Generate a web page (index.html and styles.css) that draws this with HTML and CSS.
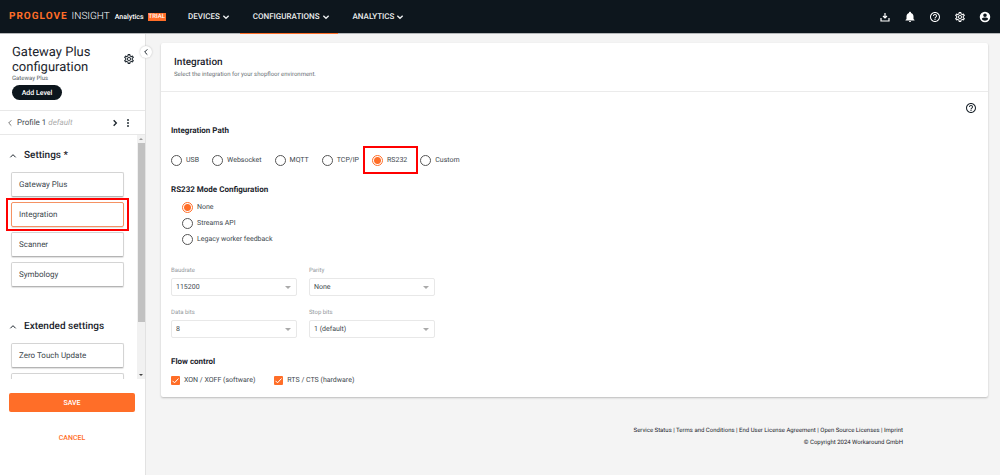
FILE: index.html
```html
<!DOCTYPE html>
<html lang="en">
<head>
<meta charset="utf-8">
<title>Gateway Plus configuration</title>
<link rel="stylesheet" href="styles.css">
</head>
<body>
<svg class="defs" aria-hidden="true">
  <symbol id="gear" viewBox="0 0 24 24"><path fill="currentColor" d="M19.43 12.98c.04-.32.07-.64.07-.98s-.03-.66-.07-.98l2.11-1.65c.19-.15.24-.42.12-.64l-2-3.46c-.09-.16-.26-.25-.44-.25-.06 0-.12.01-.17.03l-2.49 1c-.52-.4-1.08-.73-1.69-.98l-.38-2.65C14.46 2.18 14.25 2 14 2h-4c-.25 0-.46.18-.49.42l-.38 2.65c-.61.25-1.17.59-1.69.98l-2.49-1c-.06-.02-.12-.03-.18-.03-.17 0-.34.09-.43.25l-2 3.46c-.13.22-.07.49.12.64l2.11 1.65c-.04.32-.07.65-.07.98s.03.66.07.98l-2.11 1.65c-.19.15-.24.42-.12.64l2 3.46c.09.16.26.25.44.25.06 0 .12-.01.17-.03l2.49-1c.52.4 1.08.73 1.69.98l.38 2.65c.03.24.24.42.49.42h4c.25 0 .46-.18.49-.42l.38-2.65c.61-.25 1.17-.59 1.69-.98l2.49 1c.06.02.12.03.18.03.17 0 .34-.09.43-.25l2-3.46c.12-.22.07-.49-.12-.64l-2.11-1.65zm-1.98-1.71c.04.31.05.52.05.73 0 .21-.02.43-.05.73l-.14 1.13.89.7 1.08.84-.7 1.21-1.27-.51-1.04-.42-.9.68c-.43.32-.84.56-1.25.73l-1.06.43-.16 1.13-.2 1.35h-1.4l-.19-1.35-.16-1.13-1.06-.43c-.43-.18-.83-.41-1.23-.71l-.91-.7-1.06.43-1.27.51-.7-1.21 1.08-.84.89-.7-.14-1.13c-.03-.31-.05-.54-.05-.74s.02-.43.05-.73l.14-1.13-.89-.7-1.08-.84.7-1.21 1.27.51 1.04.42.9-.68c.43-.32.84-.56 1.25-.73l1.06-.43.16-1.13.2-1.35h1.39l.19 1.35.16 1.13 1.06.43c.43.18.83.41 1.23.71l.91.7 1.06-.43 1.27-.51.7 1.21-1.07.85-.89.7.14 1.13zM12 8c-2.21 0-4 1.79-4 4s1.79 4 4 4 4-1.79 4-4-1.79-4-4-4zm0 6c-1.1 0-2-.9-2-2s.9-2 2-2 2 .9 2 2-.9 2-2 2z"/></symbol>
  <symbol id="help" viewBox="0 0 24 24"><path fill="currentColor" d="M11 18h2v-2h-2v2zm1-16C6.48 2 2 6.48 2 12s4.480 10 10 10 10-4.480 10-10S17.520 2 12 2zm0 18c-4.410 0-8-3.590-8-8s3.590-8 8-8 8 3.590 8 8-3.590 8-8 8zm0-14c-2.210 0-4 1.790-4 4h2c0-1.100.9-2 2-2s2 .9 2 2c0 2-3 1.750-3 5h2c0-2.250 3-2.500 3-5 0-2.210-1.790-4-4-4z"/></symbol>
  <symbol id="down" viewBox="0 0 12 12"><path d="M2 4l4 4 4-4" fill="none" stroke="currentColor" stroke-width="2"/></symbol>
  <symbol id="up" viewBox="0 0 12 12"><path d="M2 8l4-4 4 4" fill="none" stroke="currentColor" stroke-width="1.500"/></symbol>
  <symbol id="left" viewBox="0 0 12 12"><path d="M8 2L4 6l4 4" fill="none" stroke="currentColor" stroke-width="1.500"/></symbol>
  <symbol id="right" viewBox="0 0 12 12"><path d="M4 2l4 4-4 4" fill="none" stroke="currentColor" stroke-width="2"/></symbol>
</svg>

<header class="topbar">
  <a class="brand" href="#"><span class="brand-name">PROGLOVE</span><span class="brand-product">INSIGHT</span><span class="brand-module">Analytics</span><span class="trial">TRIAL</span></a>
  <nav class="menu">
    <a href="#">DEVICES <svg class="chevron"><use href="#down"/></svg></a>
    <a class="current" href="#">CONFIGURATIONS <svg class="chevron"><use href="#down"/></svg></a>
    <a href="#">ANALYTICS <svg class="chevron"><use href="#down"/></svg></a>
  </nav>
  <div class="tools">
    <button aria-label="Downloads"><svg viewBox="0 0 24 24"><path d="M4 14v6h16v-6M12 4v10M8 10l4 4 4-4" fill="none" stroke="currentColor" stroke-width="2.400"/></svg></button>
    <button aria-label="Notifications"><svg viewBox="0 0 24 24"><path fill="currentColor" d="M12 22c1.100 0 2-.9 2-2h-4c0 1.100.9 2 2 2zm7-6v-5c0-3.500-1.900-6.200-5-7v-.6C14 2.500 13.100 1.500 12 1.500s-2 1-2 1.900V4c-3.100.8-5 3.500-5 7v5l-2 2v1h18v-1z"/></svg></button>
    <button aria-label="Help"><svg><use href="#help"/></svg></button>
    <button aria-label="Settings"><svg><use href="#gear"/></svg></button>
    <button aria-label="Account"><svg viewBox="0 0 24 24"><path fill="currentColor" fill-rule="evenodd" d="M12 1.500a10.500 10.500 0 100 21 10.500 10.500 0 000-21zM12 5a3.600 3.600 0 110 7.200A3.600 3.600 0 0112 5zm0 14.500c-2.700 0-5-1.300-6.300-3.400.1-2 4.200-2.900 6.300-2.900s6.200.9 6.300 2.900c-1.300 2.100-3.600 3.400-6.300 3.400z"/></svg></button>
  </div>
</header>

<div class="shell">
  <aside class="sidebar">
    <button class="collapse" aria-label="Collapse"><svg><use href="#left"/></svg></button>
    <div class="side-head">
      <div class="side-title">
        <h1>Gateway Plus configuration</h1>
        <p>Gateway Plus</p>
        <button class="add">Add Level</button>
      </div>
      <button class="gear" aria-label="Configuration settings"><svg><use href="#gear"/></svg></button>
    </div>
    <div class="profile">
      <button class="prev" aria-label="Previous"><svg><use href="#left"/></svg></button>
      <span class="profile-name">Profile 1 <em>default</em></span>
      <button aria-label="Next"><svg><use href="#right"/></svg></button>
      <button class="more" aria-label="More"><svg viewBox="0 0 12 12"><g fill="currentColor"><circle cx="6" cy="1.500" r="1.400"/><circle cx="6" cy="6" r="1.400"/><circle cx="6" cy="10.500" r="1.400"/></g></svg></button>
    </div>
    <div class="side-list">
      <div class="side-items">
        <section class="group">
          <h2><svg><use href="#up"/></svg>Settings *</h2>
          <a class="item" href="#">Gateway Plus</a>
          <a class="item selected marked" href="#">Integration</a>
          <a class="item" href="#">Scanner</a>
          <a class="item" href="#">Symbology</a>
        </section>
        <section class="group">
          <h2><svg><use href="#up"/></svg>Extended settings</h2>
          <a class="item" href="#">Zero Touch Update</a>
          <a class="item" href="#" aria-label="More settings"></a>
        </section>
      </div>
      <div class="scrollbar"><i class="arrow-up"></i><i class="thumb"></i><i class="arrow-down"></i></div>
    </div>
    <div class="actions">
      <button class="save">SAVE</button>
      <button class="cancel">CANCEL</button>
    </div>
  </aside>

  <main class="content">
    <form class="card">
      <div class="card-head">
        <h2>Integration</h2>
        <p>Select the integration for your shopfloor environment.</p>
      </div>
      <div class="card-body">
        <button type="button" class="info" aria-label="Help"><svg><use href="#help"/></svg></button>
        <h3>Integration Path</h3>
        <div class="paths">
          <label><input type="radio" name="path">USB</label>
          <label><input type="radio" name="path">Websocket</label>
          <label><input type="radio" name="path">MQTT</label>
          <label><input type="radio" name="path">TCP/IP</label>
          <label class="marked"><input type="radio" name="path" checked>RS232</label>
          <label><input type="radio" name="path">Custom</label>
        </div>
        <h3>RS232 Mode Configuration</h3>
        <div class="modes">
          <label><input type="radio" name="mode" checked>None</label>
          <label><input type="radio" name="mode">Streams API</label>
          <label><input type="radio" name="mode">Legacy worker feedback</label>
        </div>
        <div class="fields">
          <div class="field"><label for="baud">Baudrate</label><div class="pick"><select id="baud"><option>115200</option></select></div></div>
          <div class="field"><label for="parity">Parity</label><div class="pick"><select id="parity"><option>None</option></select></div></div>
          <div class="field"><label for="data">Data bits</label><div class="pick"><select id="data"><option>8</option></select></div></div>
          <div class="field"><label for="stop">Stop bits</label><div class="pick"><select id="stop"><option>1 (default)</option></select></div></div>
        </div>
        <h3>Flow control</h3>
        <div class="checks">
          <label><span class="check"><input type="checkbox" checked><svg viewBox="0 0 9 9"><path d="M1.500 4.800l2 2 4-4.300" fill="none" stroke="#fff"/></svg></span>XON / XOFF (software)</label>
          <label><span class="check"><input type="checkbox" checked><svg viewBox="0 0 9 9"><path d="M1.500 4.800l2 2 4-4.300" fill="none" stroke="#fff"/></svg></span>RTS / CTS (hardware)</label>
        </div>
      </div>
    </form>
    <footer class="footer">
      <p><a href="#">Service Status</a> | <a href="#">Terms and Conditions</a> | <a href="#">End User License Agreement</a> | <a href="#">Open Source Licenses</a> | <a href="#">Imprint</a></p>
      <p>© Copyright 2024 Workaround GmbH</p>
    </footer>
  </main>
</div>
</body>
</html>
```
FILE: styles.css
```css
* { box-sizing: border-box; }
body {
  margin: 0;
  min-height: 100vh;
  display: flex;
  flex-direction: column;
  background: #f4f4f4;
  color: #1b242c;
  font: 7px/12px Roboto, "Liberation Sans", sans-serif;
  text-rendering: geometricPrecision;
}
h1, h2, h3, p { margin: 0; font-weight: 500; }
a { color: inherit; text-decoration: none; }
button, select, input { font: inherit; color: inherit; margin: 0; text-rendering: inherit; }
button { padding: 0; border: 0; background: none; }
svg { display: block; }
.defs { position: absolute; width: 0; height: 0; }

/* Top bar */
.topbar {
  display: flex;
  align-items: stretch;
  height: 34px;
  background: #0d161d;
  border-bottom: 1px solid #b5b7b9;
  color: #fff;
}
.brand { display: flex; align-items: center; width: 188px; padding-left: 9px; }
.brand-name { color: #ff6e28; font-size: 10px; font-weight: 700; letter-spacing: 1px; }
.brand-product { margin-left: 4px; font-size: 10px; font-weight: 300; }
.brand-module { margin-left: 5px; font-weight: 500; }
.trial {
  margin-left: 4px;
  padding: 0 1px;
  background: #ff6e28;
  font-size: 6px;
  line-height: 8px;
  font-weight: 500;
}
.menu { display: flex; gap: 23px; font-size: 8px; font-weight: 500; color: #eceeef; }
.menu a { display: flex; align-items: center; gap: 2px; position: relative; }
.chevron { width: 8px; height: 8px; }
.current::after {
  content: "";
  position: absolute;
  left: -13px;
  right: -8px;
  bottom: -1px;
  height: 1px;
  background: #ff6e28;
}
.tools { display: flex; align-items: center; gap: 13px; margin-left: auto; padding-right: 9px; }
.tools svg { width: 12px; height: 12px; }

.shell { flex: 1; display: flex; }

/* Sidebar */
.sidebar {
  position: relative;
  flex: none;
  width: 146px;
  background: #fff;
  border-right: 1px solid #e2e2e2;
}
.collapse {
  position: absolute;
  top: 12px;
  right: -7px;
  width: 12px;
  height: 12px;
  border-radius: 50%;
  background: #fff;
  box-shadow: 0 0 2px #bbb;
}
.collapse svg { width: 8px; height: 8px; margin: 0 auto; }
.side-head {
  display: flex;
  height: 77px;
  padding: 11px 10px 0 12px;
  border-bottom: 1px solid #e8e8e8;
}
.side-title { flex: 1; }
.side-title h1 { font-size: 13px; line-height: 15px; font-weight: 400; }
.side-title p { font-size: 6px; line-height: 8px; font-weight: 400; color: #555d63; }
.add {
  display: block;
  width: 50px;
  height: 15px;
  margin-top: 2px;
  border-radius: 8px;
  background: #0d161d;
  color: #fff;
  font-weight: 500;
}
.gear { align-self: flex-start; margin-top: 8px; }
.gear svg { width: 12px; height: 12px; }
.profile {
  display: flex;
  align-items: center;
  height: 24px;
  padding: 0 13px 0 6px;
  border-bottom: 1px solid #e8e8e8;
}
.profile svg { width: 8px; height: 8px; }
.prev { color: #777; }
.profile-name { flex: 1; margin-left: 3px; font-size: 8px; color: #444c52; }
.profile-name em { color: #aaa; }
.more { margin-left: 5px; }
.side-list { display: flex; height: 244px; overflow: hidden; }
.side-items { flex: 1; padding: 13px 13px 0 11px; }
.group { display: flex; flex-direction: column; gap: 5px; margin-bottom: 32px; }
.group h2 {
  display: flex;
  align-items: center;
  gap: 7px;
  margin-bottom: 3px;
  font-size: 10px;
  line-height: 16px;
}
.group h2 svg { width: 8px; height: 8px; margin-left: -2px; }
.item {
  display: block;
  height: 25px;
  padding: 0 7px;
  border: 1px solid #d4d4d4;
  border-bottom-color: #b4b4b4;
  border-radius: 2px;
  box-shadow: 0 1px 1px #e0e0e0;
  color: #40484e;
  font-size: 8px;
  line-height: 23px;
}
.item.selected { border-color: #f59263; }
.marked { position: relative; }
.marked::after { content: ""; position: absolute; border: 2px solid #f00; }
.item.marked::after { inset: -5px -6px; }
.scrollbar {
  display: flex;
  flex-direction: column;
  align-items: center;
  flex: none;
  width: 8px;
  background: #f1f1f1;
}
.thumb { width: 7px; height: 179px; background: #c1c1c1; }
.arrow-up, .arrow-down { border: 2px solid transparent; }
.arrow-up { margin: 1px 0 3px; border-bottom-color: #999; }
.arrow-down { margin-top: auto; margin-bottom: 1px; border-top-color: #444; }
.actions { display: flex; flex-direction: column; padding: 14px 10px 0 9px; gap: 16px; }
.actions button { font-weight: 500; height: 19px; border-radius: 2px; }
.save { background: #ff6e28; color: #fff; }
.cancel { color: #ff6e28; }

/* Main card */
.content { flex: 1; padding: 9px 12px 0 15px; }
.card {
  border-radius: 2px;
  background: #fff;
  box-shadow: 0 1px 2px #bbb;
}
.card-head { height: 49px; padding: 13px 13px 0; border-bottom: 1px solid #ebebeb; }
.card-head h2 { font-size: 10px; line-height: 14px; }
.card-head p { font-size: 6px; line-height: 10px; font-weight: 400; color: #6a7176; }
.card-body { position: relative; padding: 33px 11px 11px 10px; }
.info { position: absolute; top: 10px; right: 11px; }
.info svg { width: 12px; height: 12px; }
h3 { font-size: 8px; line-height: 12px; }
.card h3 { font-weight: 700; }
.card label { display: flex; align-items: center; color: #40484e; }
.paths { display: flex; flex-wrap: wrap; gap: 13px; margin: 17px 0 18px; }
.paths label { gap: 4px; }
.paths .marked::after { inset: -8px -11px -8px -9px; }
input[type="radio"] {
  appearance: none;
  width: 11px;
  height: 11px;
  border: 1px solid #555;
  border-radius: 50%;
}
input[type="radio"]:checked {
  border-color: #ff6e28;
  background: radial-gradient(circle, #ff6e28 3px, #fff 4px);
}
.modes { display: flex; flex-direction: column; gap: 4px; margin: 5px 0 20px 11px; }
.modes label { gap: 4px; height: 12px; }
.fields { display: grid; grid-template-columns: 126px 126px; gap: 11px 12px; margin-bottom: 18px; }
.field label { margin-bottom: 1px; font-size: 6px; color: #92989c; }
.pick { position: relative; }
.pick::after {
  content: "";
  position: absolute;
  top: 8px;
  right: 6px;
  border: 3px solid transparent;
  border-top-color: #aaa;
  border-bottom: 0;
}
.pick select {
  appearance: none;
  display: block;
  width: 100%;
  height: 18px;
  padding: 0 4px;
  border: 1px solid #e8e8e8;
  border-radius: 2px;
  background: #fff;
  color: #40484e;
}
.checks { display: flex; gap: 19px; margin-top: 6px; }
.checks label { gap: 4px; }
.check { position: relative; width: 9px; height: 9px; }
.check input {
  appearance: none;
  display: block;
  width: 9px;
  height: 9px;
  border-radius: 1px;
  background: #ff6e28;
}
.check svg { position: absolute; inset: 0; }
.footer { padding: 28px 85px 0 0; text-align: right; font-size: 6px; }
.footer p { font-weight: 400; }
```
